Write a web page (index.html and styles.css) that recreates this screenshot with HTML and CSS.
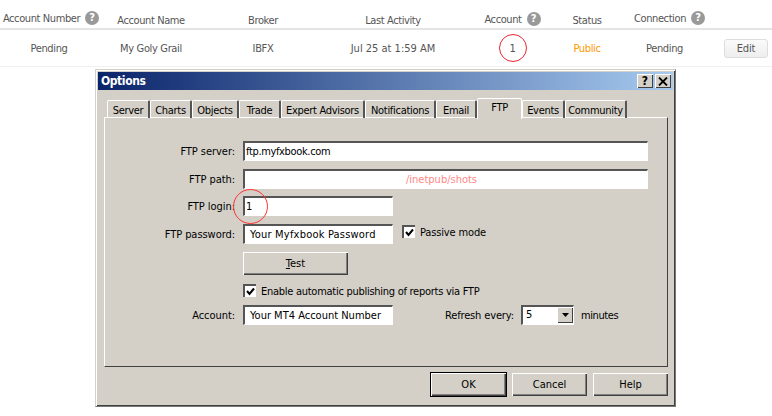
FILE: index.html
```html
<!DOCTYPE html>
<html lang="en">
<head>
<meta charset="utf-8">
<title>Options</title>
<link rel="stylesheet" href="styles.css">
</head>
<body>
<div class="table">
  <div class="thead">
    <div class="th up2 shift-a">Account Number<span class="help">?</span></div>
    <div class="th">Account Name</div>
    <div class="th">Broker</div>
    <div class="th">Last Activity</div>
    <div class="th up1">Account<span class="help">?</span></div>
    <div class="th">Status</div>
    <div class="th up2 shift-c">Connection<span class="help">?</span></div>
    <div class="th"></div>
  </div>
  <div class="tbody">
    <div class="td">Pending</div>
    <div class="td">My Goly Grail</div>
    <div class="td">IBFX</div>
    <div class="td date">Jul 25 at 1:59 AM</div>
    <div class="td"><span class="ring">1</span></div>
    <div class="td public">Public</div>
    <div class="td">Pending</div>
    <div class="td"><button class="edit">Edit</button></div>
  </div>
</div>

<div class="window">
  <div class="titlebar">
    <span class="title">Options</span>
    <span class="ctl">?</span>
    <span class="ctl">
      <svg width="10" height="9" viewBox="0 0 10 9"><path d="M1 0.5 L9 8.5 M9 0.5 L1 8.5" stroke="#000" stroke-width="1.8" fill="none"/></svg>
    </span>
  </div>
  <div class="body">
    <div class="tabs">
      <span class="tab">Server</span>
      <span class="tab">Charts</span>
      <span class="tab">Objects</span>
      <span class="tab">Trade</span>
      <span class="tab">Expert Advisors</span>
      <span class="tab">Notifications</span>
      <span class="tab">Email</span>
      <span class="tab active">FTP</span>
      <span class="tab">Events</span>
      <span class="tab">Community</span>
    </div>
    <div class="panel">
      <div class="row">
        <label class="lbl">FTP server:</label>
        <div class="field wide server">ftp.myfxbook.com</div>
      </div>
      <div class="row">
        <label class="lbl">FTP path:</label>
        <div class="field wide path">/inetpub/shots</div>
      </div>
      <div class="row login">
        <label class="lbl">FTP login:</label>
        <div class="field">1</div>
        <span class="circle"></span>
      </div>
      <div class="row">
        <label class="lbl">FTP password:</label>
        <div class="field inset pass">Your Myfxbook Password</div>
        <span class="check passive"><svg width="9" height="9" viewBox="0 0 9 9"><path d="M1 4 L3.5 7 L8 1.5" stroke="#000" stroke-width="2" fill="none"/></svg></span>
        <span class="chk-text">Passive mode</span>
      </div>
      <div class="row btn-row">
        <button class="btn test"><u>T</u>est</button>
      </div>
      <div class="row check-row">
        <span class="check"><svg width="9" height="9" viewBox="0 0 9 9"><path d="M1 4 L3.5 7 L8 1.5" stroke="#000" stroke-width="2" fill="none"/></svg></span>
        <span class="chk-text">Enable automatic publishing of reports via FTP</span>
      </div>
      <div class="row">
        <label class="lbl">Account:</label>
        <div class="field inset">Your MT4 Account Number</div>
        <span class="refresh">Refresh every:</span>
        <div class="field select"><span class="sel-val">5</span><span class="arrow"><svg width="7" height="4" viewBox="0 0 7 4"><path d="M0 0 H7 L3.5 4 Z" fill="#000"/></svg></span></div>
        <span class="minutes">minutes</span>
      </div>
    </div>
    <div class="actions">
      <button class="btn def">OK</button>
      <button class="btn">Cancel</button>
      <button class="btn">Help</button>
    </div>
  </div>
</div>
</body>
</html>
```

FILE: styles.css
```css
* { box-sizing: border-box; }
html, body { margin: 0; padding: 0; background: #fff; }
body {
  width: 772px;
  height: 416px;
  overflow: hidden;
  font-family: "DejaVu Sans Condensed", "Liberation Sans", Arial, sans-serif;
  font-stretch: condensed;
}

/* top table */
.thead, .tbody {
  display: grid;
  grid-template-columns: 98px 106px 118px 142px 97px 52px 103px 56px;
}
.thead {
  height: 30px;
  border-bottom: 2px solid #e4e4e4;
}
.tbody {
  height: 37px;
  border-bottom: 1px solid #f0f0f0;
}
.th {
  display: flex;
  align-items: center;
  justify-content: center;
  padding-top: 12px;
  height: 28px;
  font-size: 11px;
  color: #555;
  white-space: nowrap;
  letter-spacing: -0.4px;
}
.th.up2 { padding-top: 8px; }
.th.up1 { padding-top: 10px; }
.th.shift-a { padding-left: 4px; }
.th.shift-c { padding-left: 10px; }
.help {
  width: 14px;
  height: 14px;
  margin-left: 5px;
  border-radius: 50%;
  background: #999;
  color: #fff;
  font-size: 11px;
  font-weight: bold;
  line-height: 14px;
  text-align: center;
  letter-spacing: 0;
  flex: none;
}
.td {
  display: flex;
  align-items: center;
  justify-content: center;
  font-size: 11px;
  color: #555;
  letter-spacing: -0.35px;
}
.td.date { letter-spacing: 0; }
.public { color: #f90; }
.ring {
  width: 28px;
  height: 28px;
  border: 1px solid #e8252f;
  border-radius: 50%;
  display: flex;
  align-items: center;
  justify-content: center;
  font-size: 11px;
}
.edit {
  width: 44px;
  height: 19px;
  margin-left: 4px;
  padding: 0;
  border: 1px solid #ddd;
  border-radius: 3px;
  background: linear-gradient(#fafafa, #eee);
  font: inherit;
  font-size: 11px;
  letter-spacing: -0.2px;
  color: #555;
}

/* dialog */
.window {
  width: 581px;
  height: 338px;
  margin: 2px 0 0 95px;
  border: 1px solid #777;
  border-top-color: #d4d0c8;
  border-left-color: #d4d0c8;
  padding: 2px;
  background: #d4d0c8;
  box-shadow: inset 1px 1px 0 #fff, inset -1px -1px 0 #404040;
  color: #000;
  font-size: 11px;
}
.titlebar {
  height: 18px;
  display: flex;
  align-items: center;
  padding: 0 2px 0 3px;
  gap: 2px;
  background: linear-gradient(90deg, #0a246a, #a6caf0);
}
.title {
  flex: 1;
  color: #fff;
  font-weight: bold;
  font-size: 12px;
  letter-spacing: -0.4px;
}
.ctl {
  width: 16px;
  height: 14px;
  display: flex;
  align-items: center;
  justify-content: center;
  background: #d4d0c8;
  font-weight: bold;
  font-size: 12px;
  box-shadow: inset 1px 1px 0 #fff, inset -1px -1px 0 #404040;
}
.body { padding: 8px 6px 0; }
.tabs {
  display: grid;
  grid-template-columns: 43px 42px 47px 42px 84px 71px 41px 45px 43px 62px;
  height: 20px;
  padding-left: 3px;
  align-items: end;
  position: relative;
  z-index: 1;
}
.tab {
  height: 18px;
  display: flex;
  align-items: center;
  justify-content: center;
  padding-top: 1px;
  border-top: 1px solid #fff;
  border-left: 1px solid #fff;
  border-right: 2px solid #555;
  border-radius: 2px 2px 0 0;
  margin-bottom: 1px;
  white-space: nowrap;
  letter-spacing: -0.3px;
}
.tab.active {
  height: 21px;
  margin: 0;
  background: #d4d0c8;
  border-right: 1px solid #fff;
  padding: 0 0 3px;
}
.panel {
  width: 564px;
  height: 250px;
  margin-top: -1px;
  padding-top: 23px;
  border: 1px solid #fff;
  border-right: 1px solid #404040;
  border-bottom: 1px solid #404040;
  display: flex;
  flex-direction: column;
}
.row {
  display: flex;
  align-items: center;
  height: 20px;
  margin-bottom: 8px;
}
.row.login { position: relative; margin-bottom: 8px; margin-top: -1px; }
.lbl {
  width: 130px;
  margin-right: 8px;
  text-align: right;
  flex: none;
  letter-spacing: -0.05px;
}
.field {
  width: 150px;
  height: 20px;
  padding: 1px 0 0 1px;
  background: #fff;
  border: 1px solid #fff;
  border-top: 2px solid #555;
  border-left: 2px solid #555;
  line-height: 16px;
  white-space: nowrap;
}
.field.wide { width: 405px; }
.field.server { letter-spacing: -0.35px; }
.field.inset { padding-left: 5px; }
.field.pass { letter-spacing: 0.2px; }
.path {
  color: #f88;
  padding-left: 161px;
}
.circle {
  position: absolute;
  left: 128px;
  top: -7px;
  width: 35px;
  height: 35px;
  border: 1px solid #f33;
  border-radius: 50%;
}
.check {
  width: 13px;
  height: 13px;
  display: flex;
  align-items: center;
  justify-content: center;
  background: #fff;
  border-top: 2px solid #555;
  border-left: 2px solid #555;
  flex: none;
}
.check.passive { margin: 0 5px 6px 9px; }
.chk-text { margin-left: 1px; }
.check.passive + .chk-text { margin: 0 0 4px 0; letter-spacing: -0.15px; }
.btn-row { height: 23px; margin: 0 0 9px 138px; }
.check-row { height: 13px; margin: 0 0 8px 138px; }
.check-row .chk-text { margin-left: 5px; padding-top: 2px; letter-spacing: -0.27px; }
.btn {
  width: 75px;
  height: 23px;
  padding: 0;
  background: #d4d0c8;
  border: none;
  box-shadow: inset 1px 1px 0 #fff, inset -1px -1px 0 #404040, inset -2px -2px 0 #808080;
  font: inherit;
  font-size: 11px;
  color: #000;
}
.btn.test { width: 105px; }
.btn.def {
  box-shadow: 0 0 0 1px #000, inset 1px 1px 0 #fff, inset -1px -1px 0 #404040, inset -2px -2px 0 #808080;
}
.refresh { margin-left: 52px; width: 69px; white-space: nowrap; letter-spacing: -0.15px; }
.field.select {
  width: 53px;
  margin-left: 7px;
  display: flex;
  padding: 0 0 0 3px;
  justify-content: space-between;
}
.arrow {
  width: 16px;
  height: 16px;
  display: flex;
  align-items: center;
  justify-content: center;
  background: #d4d0c8;
  box-shadow: inset 1px 1px 0 #fff, inset -1px -1px 0 #404040;
}
.minutes { margin-left: 7px; letter-spacing: -0.4px; }
.actions {
  width: 564px;
  display: flex;
  justify-content: flex-end;
  gap: 6px;
  margin-top: 6px;
}
```
